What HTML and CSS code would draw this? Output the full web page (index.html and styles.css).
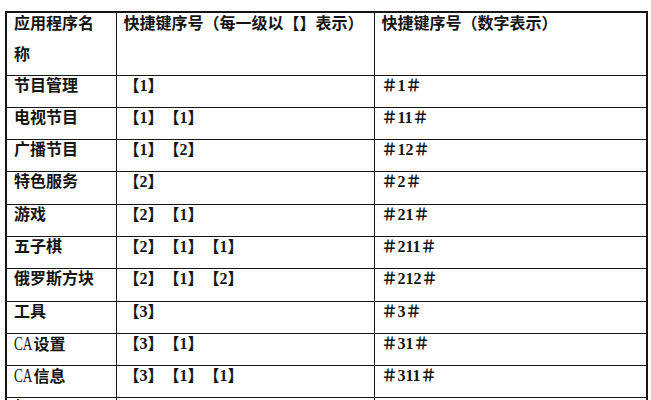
FILE: index.html
```html
<!DOCTYPE html>
<html lang="zh">
<head>
<meta charset="utf-8">
<title>快捷键序号</title>
<link rel="stylesheet" href="styles.css">
</head>
<body>
<table class="sheet">
  <colgroup>
    <col class="c-name">
    <col class="c-key">
    <col class="c-num">
  </colgroup>
  <tr class="head">
    <td><div class="lift">应用程序名称</div></td>
    <td><div class="lift">快捷键序号（每一级以【】表示）</div></td>
    <td><div class="lift">快捷键序号（数字表示）</div></td>
  </tr>
  <tr><td>节目管理</td><td>【1】</td><td>＃1＃</td></tr>
  <tr><td>电视节目</td><td>【1】【1】</td><td>＃11＃</td></tr>
  <tr><td>广播节目</td><td>【1】【2】</td><td>＃12＃</td></tr>
  <tr><td>特色服务</td><td>【2】</td><td>＃2＃</td></tr>
  <tr><td>游戏</td><td>【2】【1】</td><td>＃21＃</td></tr>
  <tr><td>五子棋</td><td>【2】【1】【1】</td><td>＃211＃</td></tr>
  <tr><td>俄罗斯方块</td><td>【2】【1】【2】</td><td>＃212＃</td></tr>
  <tr><td>工具</td><td>【3】</td><td>＃3＃</td></tr>
  <tr><td><span class="lat">CA</span>设置</td><td>【3】【1】</td><td>＃31＃</td></tr>
  <tr><td><span class="lat">CA</span>信息</td><td>【3】【1】【1】</td><td>＃311＃</td></tr>
  <tr><td>相册</td><td>【3】【1】【2】</td><td>＃312＃</td></tr>
</table>
</body>
</html>
```

FILE: styles.css
```css
html, body {
  margin: 0;
  padding: 0;
  background: #ffffff;
}

body {
  font-family: "Liberation Serif", "Noto Sans CJK SC", serif;
  color: #141414;
  overflow: hidden;
  height: 400px;
}

.sheet {
  margin: 11px 0 0 5px;
  width: 641px;
  table-layout: fixed;
  border-collapse: collapse;
  border: 2px solid #151515;
}

.c-name { width: 110px; }
.c-key { width: 258px; }
.c-num { width: 273px; }

.sheet td {
  border: 1px solid #151515;
  padding: 0 9px 0 7px;
  vertical-align: top;
  font-size: 16px;
  line-height: 20px;
  font-weight: 700;
  height: 32.3px;
  box-sizing: border-box;
  white-space: normal;
  overflow: hidden;
  text-spacing-trim: space-all;
}

.sheet .head td {
  height: 63px;
  line-height: 31px;
}

.lift {
  margin-top: -5px;
}

.lat {
  display: inline-block;
  font-family: "Liberation Serif", serif;
  font-weight: 400;
  font-size: 19px;
  line-height: 20px;
  transform: scaleX(0.7);
  transform-origin: left center;
  margin-right: -7px;
}
```
